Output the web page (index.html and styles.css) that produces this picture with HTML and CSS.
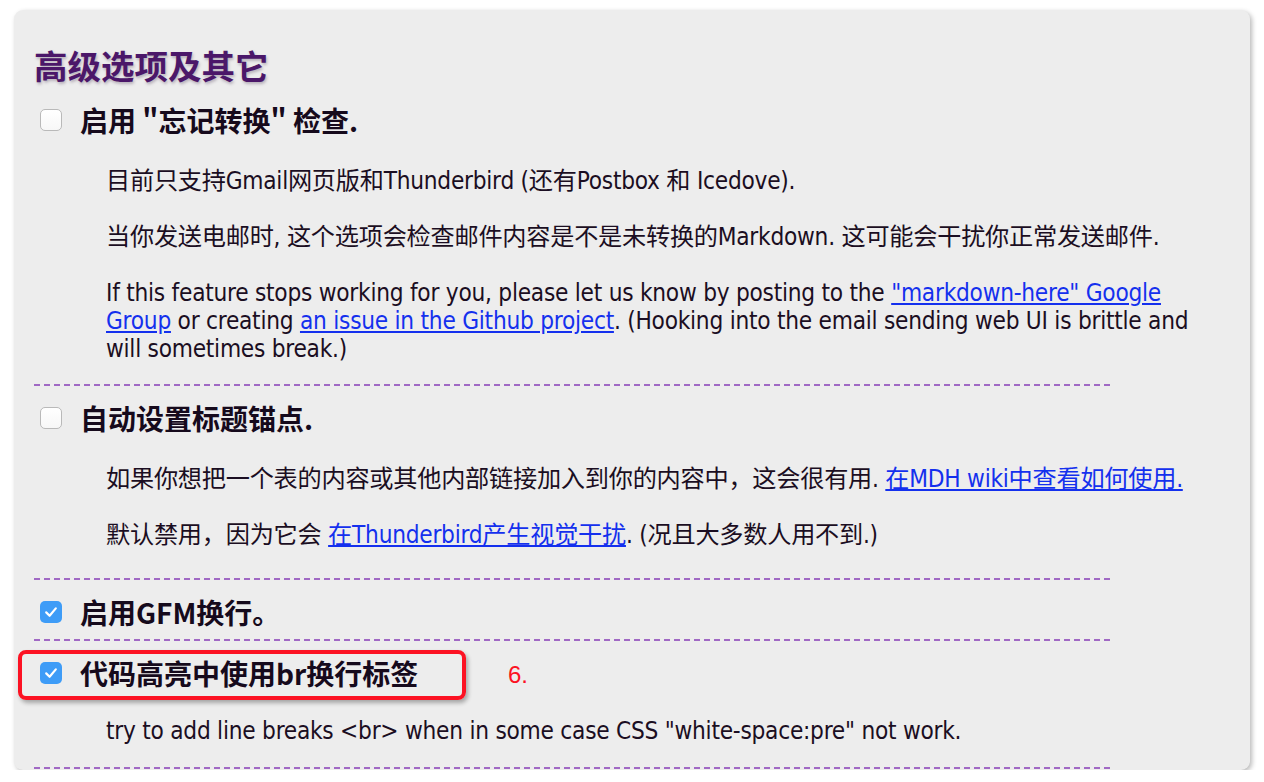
FILE: index.html
```html
<!DOCTYPE html>
<html lang="zh">
<head>
<meta charset="utf-8">
<title>高级选项及其它</title>
<link rel="stylesheet" href="styles.css">
</head>
<body>
<div class="panel">
  <h2 class="title">高级选项及其它</h2>

  <div class="option">
    <label class="opt-label"><span class="cb"></span><span>启用 "忘记转换" 检查.</span></label>
    <p class="desc first">目前只支持Gmail网页版和Thunderbird (还有Postbox 和 Icedove).</p>
    <p class="desc">当你发送电邮时, 这个选项会检查邮件内容是不是未转换的Markdown. 这可能会干扰你正常发送邮件.</p>
    <p class="desc">If this feature stops working for you, please let us know by posting to the <a href="#">"markdown-here" Google Group</a> or creating <a href="#">an issue in the Github project</a>. (Hooking into the email sending web UI is brittle and will sometimes break.)</p>
  </div>
  <div class="sep"></div>

  <div class="option">
    <label class="opt-label"><span class="cb"></span><span>自动设置标题锚点.</span></label>
    <p class="desc first">如果你想把一个表的内容或其他内部链接加入到你的内容中，这会很有用. <a href="#">在MDH wiki中查看如何使用.</a></p>
    <p class="desc">默认禁用，因为它会 <a href="#">在Thunderbird产生视觉干扰</a>. (况且大多数人用不到.)</p>
  </div>
  <div class="sep sep-b"></div>

  <div class="option">
    <label class="opt-label"><span class="cb checked"><svg viewBox="0 0 22 22" width="22" height="22"><path d="M6.2 11.4 L9.6 14.8 L15.8 7.4" fill="none" stroke="#fff" stroke-width="2.2" stroke-linecap="round" stroke-linejoin="round"/></svg></span><span>启用GFM换行。</span></label>
  </div>
  <div class="sep sep-c"></div>

  <div class="option highlight">
    <label class="opt-label"><span class="cb checked"><svg viewBox="0 0 22 22" width="22" height="22"><path d="M6.2 11.4 L9.6 14.8 L15.8 7.4" fill="none" stroke="#fff" stroke-width="2.2" stroke-linecap="round" stroke-linejoin="round"/></svg></span><span>代码高亮中使用br换行标签</span></label>
    <div class="redbox"></div>
    <span class="note">6.</span>
    <p class="desc first last">try to add line breaks &lt;br&gt; when in some case CSS "white-space:pre" not work.</p>
  </div>
  <div class="sep sep-d"></div>
</div>
</body>
</html>
```

FILE: styles.css
```css
html, body {
  margin: 0;
  padding: 0;
  background: #ffffff;
}

body {
  font-family: "DejaVu Sans", "Noto Sans CJK SC", sans-serif;
  color: #1b0e22;
}

.panel {
  margin: 10px 14px 0 14px;
  width: 1236px;
  height: 760px;
  box-sizing: border-box;
  background: #ededed;
  border-radius: 9px;
  box-shadow: 2px 2px 5px rgba(0, 0, 0, 0.28);
  padding: 35px 0 0 20px;
  overflow: hidden;
}

.title {
  margin: 0;
  font-family: "Noto Sans CJK SC", sans-serif;
  font-size: 33.5px;
  line-height: 40px;
  font-weight: 700;
  color: #4b1769;
  text-shadow: 1px 2px 3px rgba(80, 60, 90, 0.35);
}

.option {
  position: relative;
  padding-left: 6px;
}

.opt-label {
  display: flex;
  align-items: center;
  gap: 18px;
  margin-top: 20px;
  height: 30px;
  font-family: "Noto Sans CJK SC", sans-serif;
  font-size: 28px;
  font-weight: 700;
  color: #160a1c;
}

.sep + .option .opt-label {
  margin-top: 17px;
}

.cb {
  flex: none;
  width: 22px;
  height: 22px;
  box-sizing: border-box;
  border: 1px solid #b9b9b9;
  border-radius: 5px;
  background: linear-gradient(#ffffff, #f7f7f7);
  display: flex;
}

.cb.checked {
  border: none;
  background: #3e9cf7;
}

.desc {
  margin: 28px 0 0 66px;
  font-size: 24.2px;
  letter-spacing: -0.25px;
  line-height: 28px;
  max-width: 1112px;
  font-family: "DejaVu Sans", "Noto Sans CJK SC", sans-serif;
  font-stretch: condensed;
}

.desc.first {
  margin-top: 32px;
}

.desc.last {
  margin-top: 29px;
}

.desc a {
  color: #1430ee;
  text-decoration: underline;
}

.sep {
  width: 1076px;
  height: 0;
  border-top: 2px dashed #a069c4;
  margin-top: 21px;
}

.sep-b {
  margin-top: 29px;
}

.sep-c {
  margin-top: 12px;
}

.sep-d {
  margin-top: 22px;
}

.redbox {
  position: absolute;
  left: -16px;
  top: -8px;
  width: 448px;
  height: 50px;
  box-sizing: border-box;
  border: 4px solid #fc1223;
  border-radius: 8px;
  box-shadow: 2px 3px 4px rgba(0, 0, 0, 0.3);
}

.note {
  position: absolute;
  left: 474px;
  top: 2px;
  font-family: "Liberation Sans", sans-serif;
  font-size: 24px;
  line-height: 30px;
  color: #fc1223;
}
```
